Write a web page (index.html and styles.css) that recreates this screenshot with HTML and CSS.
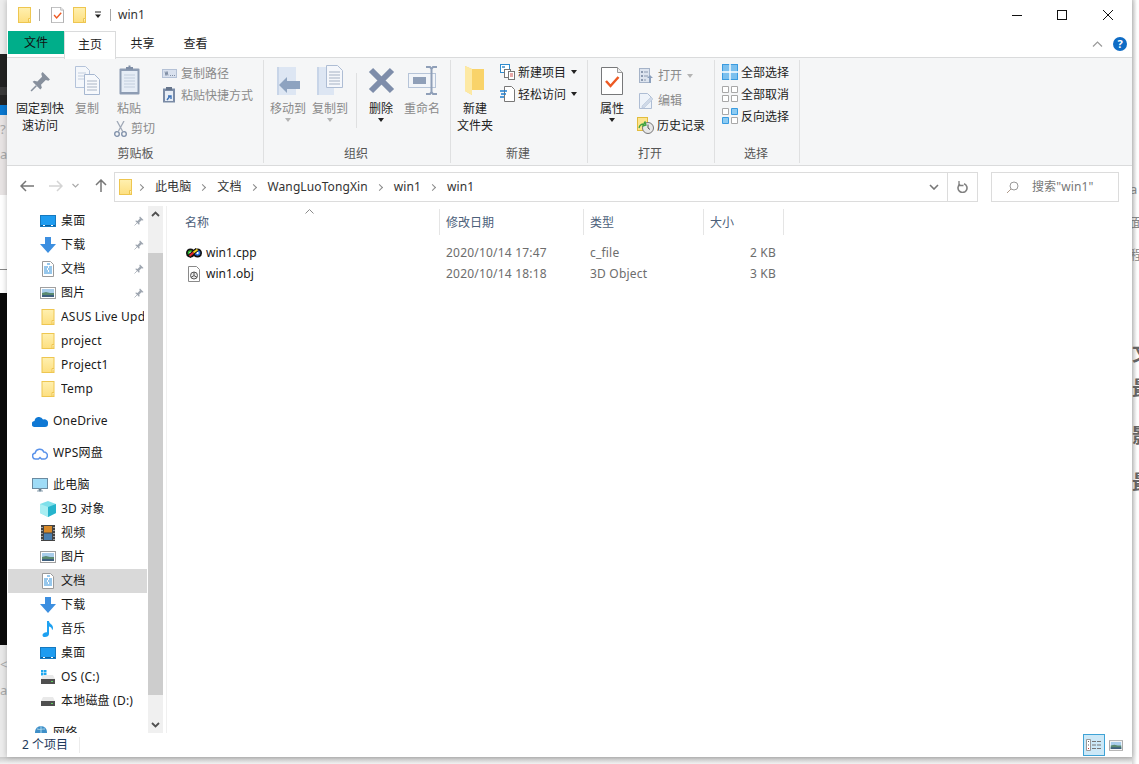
FILE: index.html
```html
<!DOCTYPE html>
<html lang="zh-CN">
<head>
<meta charset="utf-8">
<title>win1</title>
<link rel="stylesheet" href="styles.css">
</head>
<body>
<svg class="defs" width="0" height="0" aria-hidden="true">
  <defs>
    <linearGradient id="fold" x1="0" y1="0" x2="0" y2="1"><stop offset="0" stop-color="#fff0b0"/><stop offset="1" stop-color="#fddf80"/></linearGradient>
    <symbol id="folder" viewBox="0 0 13 16"><rect x=".5" y=".5" width="12" height="15" fill="url(#fold)" stroke="#eec650"/><path d="M10.500 15.500v-4h2" fill="#fff3c4" stroke="#eec650"/></symbol>
    <symbol id="check" viewBox="0 0 22 28"><path d="M.5.500h16l5 5v22H.5z" fill="#fff" stroke="#77787a"/><path d="M16.500.500v5h5" fill="#eee" stroke="#9a9a9a"/><path d="M5 14l4.500 5 8-9" fill="none" stroke="#ed5a24" stroke-width="2.500"/></symbol>
    <symbol id="dl" viewBox="0 0 16 16"><path d="M5 0h6v7h5l-8 9-8-9h5z" fill="#3d8fe0"/></symbol>
    <symbol id="doc" viewBox="0 0 12 16"><path d="M.5.500h8l3 3v12H.5z" fill="#fff" stroke="#9a9a9a"/><path d="M5 3h3M2 6h4M7 6h3M2 8h3M6 8h4M2 10h4M7 10h3M2 12h8" stroke="#2f8fd8"/></symbol>
    <symbol id="pic" viewBox="0 0 16 12"><rect x=".5" y=".5" width="15" height="11" fill="#fff" stroke="#a0a0a0"/><rect x="2" y="2" width="12" height="8" fill="#a9cdea"/><path d="M2 6l4-1 4 1 4 0v4H2z" fill="#5a8a70"/><path d="M2 8h12v2H2z" fill="#3e5f7e"/></symbol>
    <symbol id="desk" viewBox="0 0 16 12"><rect x=".5" y=".5" width="15" height="11" fill="#1e9cf0" stroke="#1579bf"/><path d="M1 10h14v1H1z" fill="#0c5f9c"/><path d="M3 10.500h2M11 10.500h2" stroke="#fff"/></symbol>
    <symbol id="pin" viewBox="0 0 20 20"><path d="M12 1l7 7-1.500 1.200L15 8.500l-4.500 4.500.8 3-1.500 1.500-7.300-7.300L4 9.200l3 .8L11.500 5.500l-.8-2.800z" fill="#87909d"/><path d="M6 14l-5 5" stroke="#87909d" stroke-width="1.500"/></symbol>
    <symbol id="drive" viewBox="0 0 14 9"><path d="M2 0h10l2 4H0z" fill="#e9e9e9"/><rect y="4" width="14" height="5" fill="#4f4f4f"/><rect x="10" y="6" width="2" height="1" fill="#5fd35f"/></symbol>
  </defs>
</svg>

<div class="backdrop bd-left-light">
  <span class="bd-small t8">?</span><span class="bd-small t9">a</span>
</div>
<div class="backdrop bd-left-dark"></div>
<div class="backdrop bd-left-blue"></div>
<div class="backdrop bd-left-white"></div>
<div class="backdrop bd-left-black"></div>
<div class="backdrop bd-left-low">
  <span class="bd-small t10">&lt;</span><span class="bd-small t11">a</span>
</div>
<div class="backdrop bd-bottom"></div>
<div class="backdrop bd-right">
  <span class="bd-small t1">a</span><span class="bd-small t2">面</span><span class="bd-small t3">程</span>
  <span class="bd-big t4">文</span><span class="bd-big t5">最</span><span class="bd-big t6">影</span><span class="bd-big t7">最</span>
</div>

<div class="window">
  <header class="titlebar">
    <svg class="q-folder" width="13" height="16"><use href="#folder"/></svg>
    <i class="q-sep"></i>
    <svg class="q-check" width="13" height="16"><use href="#check"/></svg>
    <svg class="q-folder2" width="13" height="16"><use href="#folder"/></svg>
    <svg class="q-more" width="8" height="8" viewBox="0 0 8 8"><path d="M1 1h6" stroke="#222"/><path d="M1 3.500h6L4 7z" fill="#222"/></svg>
    <i class="q-sep q-sep2"></i>
    <span class="win-title">win1</span>
    <div class="caption">
      <svg width="10" height="10" viewBox="0 0 10 10"><path d="M0 5.500h10" stroke="#111"/></svg>
      <svg width="10" height="10" viewBox="0 0 10 10"><rect x=".5" y=".5" width="9" height="9" fill="none" stroke="#111"/></svg>
      <svg width="10" height="10" viewBox="0 0 10 10"><path d="M0 0l10 10M10 0L0 10" stroke="#111"/></svg>
    </div>
  </header>

  <nav class="tabs">
    <span class="tab tab-file">文件</span>
    <span class="tab tab-active">主页</span>
    <span class="tab tab-plain">共享</span>
    <span class="tab tab-plain">查看</span>
    <svg class="collapse" width="11" height="6" viewBox="0 0 11 6"><path d="M1 5.500l4.500-4.500 4.500 4.500" fill="none" stroke="#9a9a9a" stroke-width="1.200"/></svg>
    <span class="help">?</span>
  </nav>

  <section class="ribbon">
    <div class="group g1">
      <div class="group-body">
        <div class="big w64"><span class="ico ico-pin"><svg width="21" height="21"><use href="#pin"/></svg></span><span class="on">固定到快<br>速访问</span></div>
        <div class="big w30"><span class="ico ico-up"><svg width="25" height="29" viewBox="0 0 25 29"><path d="M.5.500h10l4 4v17H.5z" fill="#f4f7fb" stroke="#b4c3da"/><path d="M3 7h8M3 10h8M3 13h8" stroke="#c3cede"/><path d="M9.500 8.500h10l5 5v15h-15z" fill="#f7f9fc" stroke="#a6b7d0"/><path d="M12 15h10M12 18h10M12 21h10M12 24h10" stroke="#aab5c5"/></svg></span><span class="off">复制</span></div>
        <div class="w54">
          <div class="big"><span class="ico ico-up"><svg width="21" height="30" viewBox="0 0 21 30"><rect x=".5" y="3.500" width="20" height="26" rx="1" fill="#8d9cb3"/><rect x="2.500" y="6" width="16" height="21" fill="#e6edf6"/><path d="M5 10h11M5 13h11M5 16h11M5 19h11M5 22h11" stroke="#c2cedd"/><path d="M7 4V2h2.500V.5h2V2H14v2.500H7z" fill="#7f8ea6"/></svg></span><span class="off">粘贴</span></div>
          <div class="small cut"><svg width="13" height="16" viewBox="0 0 13 16"><circle cx="3" cy="13" r="2.300" fill="none" stroke="#7d8ea9" stroke-width="1.300"/><circle cx="10" cy="13" r="2.300" fill="none" stroke="#7d8ea9" stroke-width="1.300"/><path d="M4 11L10 0M9 11L3 0" stroke="#a0a9b7" stroke-width="1.300"/></svg><span class="off">剪切</span></div>
        </div>
        <div class="smalls s22 col-g1">
          <div class="small"><svg width="15" height="9" viewBox="0 0 15 9"><rect x=".5" y=".5" width="14" height="8" fill="#d9e1ee" stroke="#b4c1d6"/><path d="M3 2.500l1 4 1-4 1 4M8 6.500h1M10 6.500h1M12 6.500h1" stroke="#6b7a92" stroke-width=".8" fill="none"/></svg><span class="off">复制路径</span></div>
          <div class="small"><svg width="15" height="16" viewBox="0 0 15 16"><rect x="1" y="1.500" width="12" height="14" fill="#7a8ba6"/><rect x="3" y="4" width="8" height="10" fill="#e7edf5"/><path d="M4 0h6v3H4z" fill="#66758c"/><path d="M5 13l3-4M6 9h3v3" stroke="#3c72b8" fill="none" stroke-width="1.400"/></svg><span class="off">粘贴快捷方式</span></div>
        </div>
      </div>
      <div class="group-label">剪贴板</div>
    </div>

    <div class="group g2">
      <div class="group-body">
        <div class="big w42"><span class="ico ico-up"><svg width="24" height="28" viewBox="0 0 24 28"><path d="M1 0h19v28H1z" fill="#dde6f3"/><path d="M1 0h2v28H1z" fill="#c8d5e8"/><path d="M3 18l8-8v4h13v8H11v4z" fill="#8ea3c0"/></svg></span><span class="off">移动到</span><i class="caret caret-off"></i></div>
        <div class="big w42"><span class="ico ico-up"><svg width="26" height="30" viewBox="0 0 26 30"><path d="M0 2h17v28H0z" fill="#dde6f3"/><path d="M0 2h2v28H0z" fill="#c8d5e8"/><path d="M9.500.5h11l5 5v17h-16z" fill="#f5f7fb" stroke="#aebdd4"/><path d="M12 7h11M12 10h11M12 13h11M12 16h11M12 19h11" stroke="#a5b1c3"/></svg></span><span class="off">复制到</span><i class="caret caret-off"></i></div>
        <i class="inner-sep"></i>
        <div class="big w42"><span class="ico"><svg width="27" height="27" viewBox="0 0 27 27"><path d="M3 3l21 21M24 3L3 24" stroke="#7e8daa" stroke-width="6"/></svg></span><span class="on">删除</span><i class="caret"></i></div>
        <div class="big w40"><span class="ico ico-up"><svg width="29" height="29" viewBox="0 0 29 29"><rect x=".5" y="7.500" width="27" height="14" fill="#f2f5f9" stroke="#b6c4d8"/><rect x="5" y="11" width="13" height="7" fill="#8f9fb8"/><path d="M18 1h4l1.500 2L25 1h4M18 28h4l1.500-2 1.500 2h4M23.500 2v25" stroke="#8f9fb8" stroke-width="2" fill="none"/></svg></span><span class="off">重命名</span></div>
      </div>
      <div class="group-label">组织</div>
    </div>

    <div class="group g3">
      <div class="group-body">
        <div class="big w48"><span class="ico ico-up"><svg width="20" height="29" viewBox="0 0 20 29"><path d="M0 0l7 3h12v21H7v5l-7-4z" fill="#fbd56b"/><path d="M0 0l7 3v26l-7-4z" fill="#fde9a4"/><path d="M7 3h12v21H7z" fill="#f9d36a"/></svg></span><span class="on">新建<br>文件夹</span></div>
        <div class="smalls s22 col-g3">
          <div class="small"><svg width="15" height="16" viewBox="0 0 15 16"><rect x=".5" y=".5" width="9" height="8" fill="#fff" stroke="#2f8ccf"/><rect x="2" y="2" width="3" height="2" fill="#6aa9d8"/><rect x="4.500" y="5.500" width="6" height="8" fill="#fff" stroke="#777"/><rect x="8.500" y="7.500" width="6" height="8" fill="#fff" stroke="#777"/><path d="M10 10h3M10 12h3" stroke="#d05050"/></svg><span class="on">新建项目</span><i class="caret caret-side"></i></div>
          <div class="small"><svg width="15" height="16" viewBox="0 0 15 16"><path d="M4.500.5h7l3 3v12h-10z" fill="#fff" stroke="#777"/><path d="M0 5h7M1 8h5M0 11h4" stroke="#1f7fd0" stroke-width="1.300"/></svg><span class="on">轻松访问</span><i class="caret caret-side"></i></div>
        </div>
      </div>
      <div class="group-label">新建</div>
    </div>

    <div class="group g4">
      <div class="group-body">
        <div class="big w48"><span class="ico ico-up"><svg width="22" height="28"><use href="#check"/></svg></span><span class="on">属性</span><i class="caret"></i></div>
        <div class="smalls s25 col-g4">
          <div class="small"><svg width="14" height="16" viewBox="0 0 14 16"><rect x=".5" y=".5" width="10" height="14" fill="#dde4ef" stroke="#a5b3c8"/><path d="M2 3h2v2H2zM2 7h2v2H2zM2 11h2v2H2z" fill="#8c9ab0"/><path d="M5 4h4M5 8h4M5 12h2" stroke="#8c9ab0"/><path d="M11 7l3 3h-2v5h-2v-5H8z" fill="#8ca0bd"/></svg><span class="off">打开</span><i class="caret caret-side caret-off"></i></div>
          <div class="small"><svg width="14" height="16" viewBox="0 0 14 16"><path d="M.5.500h8l4 4v11H.5z" fill="#eef3fa" stroke="#aebdd4"/><path d="M3 13L12 4l2 2-9 9H3z" fill="#cfd9e8" stroke="#b6c4d8" stroke-width=".6"/></svg><span class="off">编辑</span></div>
          <div class="small"><svg class="hist" width="17" height="17" viewBox="0 0 17 17"><rect x=".5" y=".5" width="10" height="13" fill="#fde48e" stroke="#e2bd3e"/><circle cx="11" cy="11" r="5.500" fill="#e8e8e8" stroke="#777"/><path d="M11 7.500V11l2 1.500" stroke="#555" fill="none"/><path d="M2 11a5 5 0 0 1 5-4l-1 2 3-1-1-3-1 1" fill="none" stroke="#3da33d" stroke-width="1.300"/></svg><span class="on">历史记录</span></div>
        </div>
      </div>
      <div class="group-label">打开</div>
    </div>

    <div class="group g5">
      <div class="group-body">
        <div class="smalls s22 col-g5">
          <div class="small"><svg width="16" height="16" viewBox="0 0 16 16"><rect x=".5" y=".5" width="15" height="15" fill="#7cc0ee" stroke="#3a9be0"/><path d="M8 0v16M0 8h16" stroke="#fff" stroke-width="1.400"/></svg><span class="on">全部选择</span></div>
          <div class="small"><svg width="16" height="16" viewBox="0 0 16 16"><path d="M.5.500h6v6h-6zM9.500.500h6v6h-6zM.5 9.500h6v6h-6zM9.500 9.500h6v6h-6z" fill="#fff" stroke="#a8a8a8"/></svg><span class="on">全部取消</span></div>
          <div class="small"><svg width="16" height="16" viewBox="0 0 16 16"><path d="M.5.500h6v6h-6zM9.500 9.500h6v6h-6z" fill="#fff" stroke="#a8a8a8"/><path d="M9.500.500h6v6h-6zM.5 9.500h6v6h-6z" fill="#8ccbf2" stroke="#3a9be0"/></svg><span class="on">反向选择</span></div>
        </div>
      </div>
      <div class="group-label">选择</div>
    </div>
  </section>

  <div class="navbar">
    <svg class="nav-back" width="14" height="12" viewBox="0 0 14 12"><path d="M6 1L1 6l5 5M1 6h13" fill="none" stroke="#777" stroke-width="1.500"/></svg>
    <svg class="nav-fwd" width="14" height="12" viewBox="0 0 14 12"><path d="M8 1l5 5-5 5M13 6H0" fill="none" stroke="#d4d4d4" stroke-width="1.500"/></svg>
    <svg class="nav-drop" width="7" height="5" viewBox="0 0 7 5"><path d="M.5 1l3 3 3-3" fill="none" stroke="#aaa" stroke-width="1.200"/></svg>
    <svg class="nav-up" width="12" height="13" viewBox="0 0 12 13"><path d="M1 6l5-5 5 5M6 1v12" fill="none" stroke="#777" stroke-width="1.500"/></svg>
    <div class="address">
      <svg class="addr-folder" width="13" height="16"><use href="#folder"/></svg>
      <i class="chev"></i><span class="crumb">此电脑</span>
      <i class="chev"></i><span class="crumb">文档</span>
      <i class="chev"></i><span class="crumb">WangLuoTongXin</span>
      <i class="chev"></i><span class="crumb">win1</span>
      <i class="chev"></i><span class="crumb">win1</span>
      <svg class="addr-drop" width="10" height="6" viewBox="0 0 10 6"><path d="M1 1l4 4 4-4" fill="none" stroke="#777" stroke-width="1.600"/></svg>
      <span class="refresh"><svg width="11" height="12" viewBox="0 0 11 12"><path d="M3 3.200a4.500 4.500 0 1 0 4-.5" fill="none" stroke="#808080" stroke-width="1.600"/><path d="M2 0v4.500h4.500" fill="none" stroke="#808080" stroke-width="1.300"/></svg></span>
    </div>
    <div class="search">
      <svg width="13" height="13" viewBox="0 0 13 13"><circle cx="8" cy="5" r="4" fill="none" stroke="#999"/><path d="M5 8l-4 4" stroke="#b09a8a"/></svg>
      <span class="crumb">搜索"win1"</span>
    </div>
  </div>

  <main class="main">
    <aside class="sidebar">
      <div class="tree">
        <div class="row l2"><svg width="16" height="12"><use href="#desk"/></svg><span class="name">桌面</span><svg class="row-pin" width="10" height="10"><use href="#pin"/></svg></div>
        <div class="row l2"><svg width="16" height="16"><use href="#dl"/></svg><span class="name">下载</span><svg class="row-pin" width="10" height="10"><use href="#pin"/></svg></div>
        <div class="row l2"><svg width="16" height="16"><use href="#doc"/></svg><span class="name">文档</span><svg class="row-pin" width="10" height="10"><use href="#pin"/></svg></div>
        <div class="row l2"><svg width="16" height="12"><use href="#pic"/></svg><span class="name">图片</span><svg class="row-pin" width="10" height="10"><use href="#pin"/></svg></div>
        <div class="row l2"><svg width="16" height="16"><use href="#folder"/></svg><span class="name">ASUS Live Update</span></div>
        <div class="row l2"><svg width="16" height="16"><use href="#folder"/></svg><span class="name">project</span></div>
        <div class="row l2"><svg width="16" height="16"><use href="#folder"/></svg><span class="name">Project1</span></div>
        <div class="row l2"><svg width="16" height="16"><use href="#folder"/></svg><span class="name">Temp</span></div>
        <div class="row l1 gap"><svg width="16" height="11" viewBox="0 0 16 11"><path d="M3 11a3 3 0 0 1-.5-6A4.500 4.500 0 0 1 11 3.500 3.800 3.800 0 0 1 16 8c0 2-1 3-3 3z" fill="#0f78d4"/></svg><span class="name">OneDrive</span></div>
        <div class="row l1 gap"><svg width="16" height="13" viewBox="0 0 16 13"><path d="M4 12a3 3 0 0 1-.8-6A4.500 4.500 0 0 1 11.800 5 3.500 3.500 0 0 1 12 12H9.500L8 10.500 6.500 12z" fill="none" stroke="#5b93ea" stroke-width="1.500"/></svg><span class="name">WPS网盘</span></div>
        <div class="row l1 gap"><svg width="16" height="15" viewBox="0 0 16 15"><rect x=".5" y=".5" width="15" height="10" fill="#9fdcf7" stroke="#6b8aa0"/><path d="M5 13h6M7 11h2v2H7z" stroke="#8aa0b0"/></svg><span class="name">此电脑</span></div>
        <div class="row l2"><svg width="16" height="16" viewBox="0 0 16 16"><path d="M8 0l8 3v9l-8 4-8-4V3z" fill="#7fe0ea"/><path d="M8 6l8-3v9l-8 4z" fill="#27b4cc"/><path d="M8 6L0 3v9l8 4z" fill="#a8eef2"/></svg><span class="name">3D 对象</span></div>
        <div class="row l2"><svg width="16" height="16" viewBox="-1 0 16 16"><rect width="14" height="16" fill="#444"/><rect x="3" y="1" width="8" height="6.500" fill="#d88a2a"/><rect x="3" y="8.500" width="8" height="6.500" fill="#4a7fb0"/><path d="M1 2v1M1 5v1M1 8v1M1 11v1M1 14v1M13 2v1M13 5v1M13 8v1M13 11v1M13 14v1" stroke="#fff"/></svg><span class="name">视频</span></div>
        <div class="row l2"><svg width="16" height="12"><use href="#pic"/></svg><span class="name">图片</span></div>
        <div class="row l2 selected"><svg width="16" height="16"><use href="#doc"/></svg><span class="name">文档</span></div>
        <div class="row l2"><svg width="16" height="16"><use href="#dl"/></svg><span class="name">下载</span></div>
        <div class="row l2"><svg width="16" height="16" viewBox="0 0 16 16"><path d="M7 0h2c0 3 4 3 4 7 0 1-.5 2-1 2 0-2-1-3-3-3.500V13c0 2-2 3-4 3-2 0-2.500-1-2.500-1.800C2.500 12.500 4.500 11 7 11.200z" fill="#1ea1f1"/></svg><span class="name">音乐</span></div>
        <div class="row l2"><svg width="16" height="12"><use href="#desk"/></svg><span class="name">桌面</span></div>
        <div class="row l2"><svg width="16" height="14" viewBox="-1 0 16 14"><path d="M0 0h2.500v2.500H0zM3 0h2.500v2.500H3zM0 3h2.500v2.500H0zM3 3h2.500v2.500H3z" fill="#1ea7ee"/><path d="M2 5h10l2 4H0z" fill="#e9e9e9"/><rect y="9" width="14" height="5" fill="#4f4f4f"/><rect x="10" y="11" width="2" height="1" fill="#5fd35f"/></svg><span class="name">OS (C:)</span></div>
        <div class="row l2"><svg width="16" height="9" viewBox="-1 0 16 9"><use href="#drive" width="14" height="9"/></svg><span class="name">本地磁盘 (D:)</span></div>
        <div class="row l1 gap"><svg width="16" height="15" viewBox="0 0 16 15"><circle cx="9" cy="6" r="6" fill="#3f8fc8"/><path d="M5 3c3 1 5 0 8 0M9 0v12" stroke="#a8d8f0"/><rect y="10" width="16" height="3" fill="#6fa8d8"/></svg><span class="name">网络</span></div>
      </div>
      <div class="scrollbar">
        <div class="sb-btn"><svg width="9" height="6" viewBox="0 0 9 6"><path d="M1 5l3.500-3.500L8 5" fill="none" stroke="#505050" stroke-width="1.800"/></svg></div>
        <div class="sb-thumb"></div>
        <div class="sb-rest"></div>
        <div class="sb-btn"><svg width="9" height="6" viewBox="0 0 9 6"><path d="M1 1l3.500 3.500L8 1" fill="none" stroke="#505050" stroke-width="1.800"/></svg></div>
      </div>
    </aside>
    <section class="list">
      <div class="list-head">
        <div class="col c-name">名称<svg class="sort" width="9" height="5" viewBox="0 0 9 5"><path d="M.5 4.500l4-4 4 4" fill="none" stroke="#8a8a8a"/></svg></div>
        <div class="col c-date">修改日期</div>
        <div class="col c-type">类型</div>
        <div class="col c-size">大小</div>
      </div>
      <div class="file">
        <div class="c-name f-name"><svg width="16" height="10" viewBox="0 0 16 10"><circle cx="4.500" cy="5" r="4.500" fill="#111"/><circle cx="11.500" cy="5" r="4.500" fill="#111"/><circle cx="4.500" cy="5" r="2.800" fill="#2bb52b"/><circle cx="11.500" cy="5" r="2.800" fill="#2a6fe0"/><circle cx="4.500" cy="5" r="1.200" fill="#fff"/><circle cx="11.500" cy="5" r="1.200" fill="#fff"/><path d="M3 8.500L11 1.500" stroke="#111" stroke-width="4"/><path d="M3.500 8L7.500 4.500" stroke="#e8262a" stroke-width="2"/><path d="M7.500 4.500L11.500 1.500" stroke="#f2d020" stroke-width="2"/></svg><span>win1.cpp</span></div>
        <div class="c-date f-cell">2020/10/14 17:47</div>
        <div class="c-type f-cell">c_file</div>
        <div class="c-size f-cell f-size">2 KB</div>
      </div>
      <div class="file">
        <div class="c-name f-name"><svg width="16" height="16" viewBox="0 0 16 16"><path d="M2.500.500h8l3 3v12h-11z" fill="#fff" stroke="#8a8a8a"/><circle cx="8" cy="9.500" r="3.500" fill="#e8e8e8" stroke="#555"/><path d="M8 9.500V6M8 9.500l-3 2M8 9.500l3 2" stroke="#555"/></svg><span>win1.obj</span></div>
        <div class="c-date f-cell">2020/10/14 18:18</div>
        <div class="c-type f-cell">3D Object</div>
        <div class="c-size f-cell f-size">3 KB</div>
      </div>
    </section>
  </main>

  <footer class="status">
    <span class="count">2 个项目</span>
    <div class="views">
      <span class="view view-on"><svg width="16" height="12" viewBox="0 0 16 12"><path d="M.5.500h4v11h-4z" fill="#fff" stroke="#999"/><path d="M2 2h1v1H2zM2 5.500h1v1H2z" fill="#666"/><path d="M2 9h1v1H2z" fill="#c33"/><path d="M6 2.500h4M11 2.500h4M6 6h4M11 6h4M6 9.500h4M11 9.500h4" stroke="#777" stroke-width="1.200"/></svg></span>
      <span class="view"><svg width="14" height="11"><use href="#pic"/></svg></span>
    </div>
  </footer>
</div>
</body>
</html>
```

FILE: styles.css
```css
html, body { margin: 0; padding: 0; }
body {
  width: 1139px;
  height: 764px;
  overflow: hidden;
  position: relative;
  background: #ededed;
  font-family: "Noto Sans", "Noto Sans CJK SC", sans-serif;
  font-size: 12px;
  color: #222;
}
.defs { position: absolute; }

/* other windows peeking out behind the explorer window */
.backdrop { position: absolute; overflow: hidden; }
.bd-left-light { left: 0; top: 115px; width: 7px; height: 80px; background: #e8e4e4; }
.bd-left-dark { left: 0; top: 54px; width: 7px; height: 51px; background: linear-gradient(#222 65%, #3a3a3a 65%, #3a3a3a 80%, #242424 80%); }
.bd-left-blue { left: 0; top: 105px; width: 7px; height: 10px; background: #0a78d0; }
.bd-left-white { left: 0; top: 195px; width: 7px; height: 98px; background: linear-gradient(#fff 76%, #888 76%, #888 77%, #fff 77%); }
.bd-left-black { left: 0; top: 293px; width: 7px; height: 352px; background: #0a0a0a; }
.bd-left-low { left: 0; top: 645px; width: 7px; height: 85px; background: #e9e9e9; }
.bd-bottom { left: 0; top: 757px; width: 1139px; height: 7px; background: linear-gradient(#c9c9c9, #f2f2f2); }
.bd-right { left: 1132px; top: 0; width: 7px; height: 764px; background: linear-gradient(90deg, #d6d6d6, #fff 5px); }
.bd-small { position: absolute; left: -2px; color: #888; font-size: 13px; }
.bd-big { position: absolute; left: 0; color: #666; font-size: 20px; font-weight: 700; }
.t1 { top: 180px; }
.t2 { top: 212px; }
.t3 { top: 244px; }
.t4 { top: 338px; }
.t5 { top: 373px; }
.t6 { top: 420px; }
.t7 { top: 467px; }
.t8 { top: 5px; left: 0; color: #aaa; }
.t9 { top: 30px; left: 0; color: #aaa; }
.t10 { top: 10px; left: 0; color: #aaa; }
.t11 { top: 36px; left: 0; color: #aaa; }

.window {
  position: relative;
  margin-left: 7px;
  width: 1125px;
  height: 757px;
  background: #fff;
  display: flex;
  flex-direction: column;
  box-shadow: 0 0 6px rgba(0, 0, 0, .25);
}

/* title bar */
.titlebar { height: 30px; display: flex; align-items: center; flex: none; }
.q-folder { margin-left: 11px; }
.q-sep { width: 1px; height: 12px; background: #a8a8a8; margin-left: 8px; }
.q-check { margin-left: 11px; }
.q-folder2 { margin-left: 9px; }
.q-more { margin-left: 8px; }
.q-sep2 { margin-left: 8px; }
.win-title { margin-left: 7px; font-size: 12px; color: #333; padding-bottom: 1px; }
.caption { margin-left: auto; display: flex; gap: 35px; padding-right: 19px; }
.caption svg:last-child { margin-left: 1px; }

/* tabs */
.tabs {
  height: 27px;
  flex: none;
  display: flex;
  align-items: flex-start;
  border-bottom: 1px solid #dadbdc;
  padding-left: 1px;
}
.tab { text-align: center; line-height: 26px; }
.tab-file { width: 56px; height: 23px; margin-top: 1px; background: #00ae8a; line-height: 23px; color: #111; }
.tab-active {
  width: 50px;
  height: 27px;
  margin-top: 1px;
  background: #fff;
  border: 1px solid #dadbdc;
  border-bottom: 0;
  line-height: 25px;
  z-index: 1;
}
.tab-plain { width: 53px; margin-top: 1px; }
.collapse { margin: 11px 0 0 auto; }
.help {
  width: 14px;
  height: 14px;
  margin: 7px 5px 0 10px;
  border-radius: 50%;
  background: #0f6cc5;
  color: #fff;
  font-weight: 700;
  font-size: 11px;
  line-height: 14px;
  text-align: center;
}

/* ribbon */
.ribbon {
  height: 108px;
  box-sizing: border-box;
  flex: none;
  display: flex;
  background: #f5f6f7;
  border-bottom: 1px solid #dadbdc;
  padding: 2px 0 2px 1px;
}
.group {
  display: flex;
  flex-direction: column;
  border-right: 1px solid #dfe0e1;
  box-sizing: border-box;
}
.g1 { width: 256px; }
.g2 { width: 187px; }
.g3 { width: 137px; }
.g4 { width: 127px; }
.g5 { width: 85px; }
.group-body { flex: 1; display: flex; min-height: 0; }
.group-label { height: 18px; line-height: 17px; text-align: center; color: #555; }
.g2 .group-label, .g3 .group-label, .g4 .group-label, .g5 .group-label { padding-right: 2px; }
.g2 .group-body { padding-left: 3px; }

.big { display: flex; flex-direction: column; align-items: center; line-height: 17px; text-align: center; }
.w64 { width: 64px; }
.w30 { width: 30px; }
.w54 { width: 54px; }
.w42 { width: 42px; }
.w40 { width: 40px; }
.w48 { width: 48px; }
.ico { height: 40px; display: flex; align-items: flex-end; justify-content: center; padding-bottom: 6px; box-sizing: border-box; }
.ico-up { padding-bottom: 5px; }
.ico-pin { padding-bottom: 8px; }
.on { color: #222; white-space: nowrap; }
.off { color: #8a8a8a; white-space: nowrap; }
.caret { width: 0; height: 0; border: 3px solid transparent; border-top: 4px solid #222; border-bottom: 0; margin-top: 1px; }
.caret-off { border-top-color: #b4b4b4; }
.caret-side { margin: 0 0 0 2px; }
.col-g4 .caret-side { margin-left: 0; }
.inner-sep { width: 1px; height: 55px; margin: 13px 3px 0 5px; background: #dfe0e1; }

.smalls { display: flex; flex-direction: column; }
.s22 .small { height: 22px; }
.s25 .small { height: 25px; }
.small { display: flex; align-items: center; gap: 4px; line-height: 17px; }
.small svg { flex: none; }
.col-g1 { margin: 2px 0 0 6px; }
.col-g3 { margin: 1px 0 0 1px; }
.col-g3 .small { gap: 3px; }
.col-g4 { margin: 3px 0 0 3px; }
.col-g5 { margin: 1px 0 0 7px; }
.col-g5 .small { gap: 3px; }
.hist { margin-left: -2px; }
.col-g4 .small { gap: 5px; }
.col-g4 .small:last-child { gap: 3px; }
.cut { margin: 3px 0 0 12px; }

/* nav bar */
.navbar { height: 40px; flex: none; box-sizing: border-box; padding-top: 6px; display: flex; align-items: flex-start; }
.nav-back { margin: 8px 0 0 13px; }
.nav-fwd { margin: 8px 0 0 15px; }
.nav-drop { margin: 11px 0 0 9px; }
.nav-up { margin: 7px 0 0 16px; }
.address {
  width: 864px;
  height: 30px;
  box-sizing: border-box;
  margin-left: 7px;
  border: 1px solid #dcdcdc;
  display: flex;
  align-items: center;
  color: #333;
}
.crumb { padding-bottom: 2px; letter-spacing: .1px; }
.addr-folder { margin-left: 4px; }
.chev { width: 4px; height: 4px; border: solid #8a8a8a; border-width: 1px 1px 0 0; transform: rotate(45deg); margin: 0 12px 0 9px; }
.addr-folder + .chev { margin-left: 6px; }
.addr-drop { margin-left: auto; margin-right: 8px; }
.refresh { width: 30px; height: 100%; box-sizing: border-box; border-left: 1px solid #dcdcdc; display: flex; align-items: center; justify-content: center; }
.search {
  width: 128px;
  height: 30px;
  box-sizing: border-box;
  margin-left: 13px;
  border: 1px solid #dcdcdc;
  display: flex;
  align-items: center;
  gap: 13px;
  padding-left: 14px;
  color: #777;
}

/* main */
.main { flex: 1; display: flex; min-height: 0; }
.sidebar { width: 158px; flex: none; display: flex; border-right: 1px solid #f0f0f0; padding-left: 1px; overflow: hidden; }
.tree { width: 139px; flex: none; padding-top: 3px; overflow: hidden; letter-spacing: .2px; }
.row { height: 24px; display: flex; align-items: center; white-space: nowrap; overflow: hidden; color: #1a1a1a; padding-right: 3px; }
.row svg { flex: none; }
.l1 { padding-left: 24px; gap: 5px; }
.l2 { padding-left: 32px; gap: 5px; }
.gap { margin-top: 8px; }
.selected { background: #d9d9d9; }
.name { flex: 1; overflow: hidden; padding-bottom: 2px; }
.row-pin { opacity: .8; margin-left: auto; }
.scrollbar { width: 15px; flex: none; margin-left: 1px; display: flex; flex-direction: column; background: #f0f0f0; }
.sb-btn { height: 16px; flex: none; display: flex; align-items: center; justify-content: center; }
.sb-thumb { height: 442px; margin-top: 31px; background: #cdcdcd; }
.sb-rest { flex: 1; }

.list { flex: 1; }
.list-head { display: flex; height: 29px; padding-top: 3px; box-sizing: content-box; }
.col { border-right: 1px solid #e5e5e5; color: #4c607a; line-height: 27px; height: 26px; position: relative; }
.c-name { width: 273px; padding-left: 18px; flex: none; box-sizing: border-box; }
.c-date { width: 144px; padding-left: 6px; flex: none; box-sizing: border-box; }
.c-type { width: 120px; padding-left: 6px; flex: none; box-sizing: border-box; }
.c-size { width: 80px; padding-left: 6px; flex: none; box-sizing: border-box; }
.sort { position: absolute; left: 138px; top: 0; }
.file { display: flex; height: 21px; align-items: center; }
.list-head + .file { margin-top: 4px; }
.f-name { display: flex; align-items: center; gap: 4px; color: #1a1a1a; }
.f-name svg { margin-left: 1px; }
.f-cell { color: #6d6d6d; letter-spacing: .2px; }
.f-size { text-align: right; padding-right: 8px; }

/* status bar */
.status { height: 24px; flex: none; display: flex; align-items: center; padding-left: 15px; color: #1e395b; }
.count { width: 57px; border-right: 1px solid #ececec; line-height: 16px; }
.views { margin-left: auto; display: flex; align-items: center; gap: 4px; padding-right: 9px; }
.view { height: 22px; display: flex; align-items: center; justify-content: center; box-sizing: border-box; }
.view-on { width: 22px; background: #cce8f7; border: 1px solid #3fa3d6; }
```
